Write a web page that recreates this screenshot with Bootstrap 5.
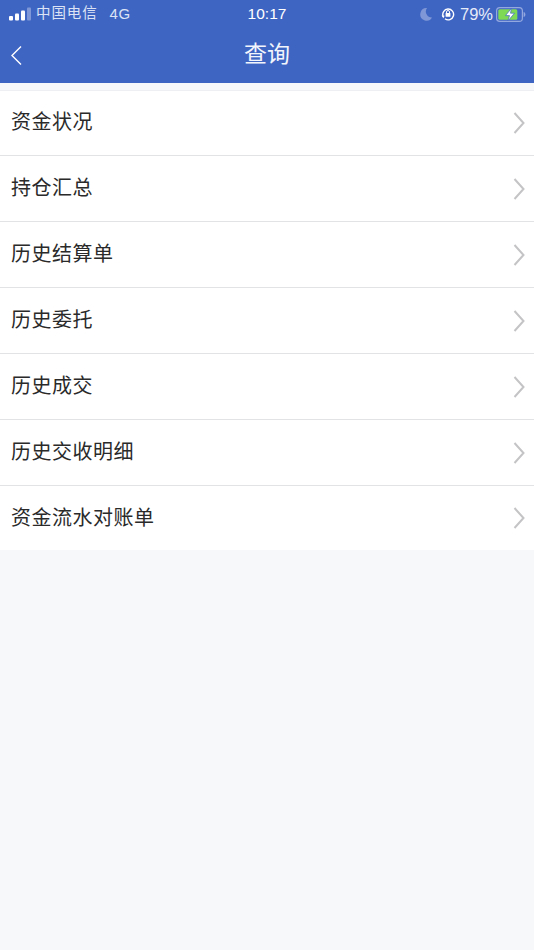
<!DOCTYPE html>
<html lang="zh">
<head>
<meta charset="utf-8">
<title>查询</title>
<link href="https://cdn.jsdelivr.net/npm/bootstrap@5.3.0/dist/css/bootstrap.min.css" rel="stylesheet">
<style>
html,body{height:100%}
body{background:#f7f8fa;font-family:"Noto Sans CJK SC","Liberation Sans",sans-serif;overflow:hidden}
.top-area{background:#3f65c3;height:83px;color:#fff}
.status-row{height:28px;padding:0 8px 0 9px;font-size:15px;color:#dbe3f5;font-family:"Liberation Sans","Noto Sans CJK SC",sans-serif}
.status-row .clock{color:#fff;font-size:15.5px;position:absolute;left:0;right:0;text-align:center;top:4px;line-height:20px}
.cn-carrier{font-size:14.5px;letter-spacing:.9px;margin-left:5px}
.net{margin-left:12px;font-size:15px;letter-spacing:.5px}
.title-row{height:55px}
.title-text{font-size:23px;line-height:1;color:#f2f5fc;padding-bottom:7px}
.back-link{position:absolute;left:10px;top:17px;line-height:0}
.pct{font-size:16.5px;color:#e6ebf8;margin:0 3px 0 5px}
.query-list{margin-top:7px;--bs-list-group-border-color:#e2e3e5;--bs-list-group-border-radius:0}
.query-row{height:66px;padding:0 9px 0 11px;font-size:20px;color:#2a2a2a;border-width:0 0 2px;line-height:1}
.query-row:last-child{height:64px;border-bottom:0}
.query-row:first-child{height:66px;border-top:1px solid #eeeff3}
.query-row span{letter-spacing:.5px;margin-top:-3px}
.query-row:first-child span{margin-top:-4px}
</style>
</head>
<body>
<div class="top-area position-relative">
  <div class="status-row d-flex align-items-center position-relative">
    <svg width="22" height="14" viewBox="0 0 22 14" aria-hidden="true"><rect x="0" y="9" width="4" height="4.5" rx="1" fill="#fff"/><rect x="6" y="6.5" width="4" height="7" rx="1" fill="#fff"/><rect x="12" y="3.5" width="4" height="10" rx="1" fill="#fff"/><rect x="18" y="0.5" width="4" height="13" rx="1" fill="#7f97d6"/></svg>
    <span class="cn-carrier">中国电信</span><span class="net">4G</span>
    <span class="clock">10:17</span>
    <div class="ms-auto d-flex align-items-center">
      <svg width="14" height="14" viewBox="0 0 14 14" class="me-2" aria-hidden="true"><path d="M8 1a6.3 6.3 0 1 0 5 9.5A6 6 0 0 1 8 1z" fill="#7f97d6"/></svg>
      <svg width="14" height="14" viewBox="0 0 14 14" aria-hidden="true"><path d="M2.2 9.5A5.4 5.4 0 1 1 4 11.8" fill="none" stroke="#fff" stroke-width="1.4"/><path d="M.6 8.6l3 .1-1.2 2.6z" fill="#fff"/><rect x="4.6" y="6" width="4.8" height="3.8" rx=".6" fill="#fff"/><path d="M5.5 6V5a1.5 1.5 0 0 1 3 0v1" fill="none" stroke="#fff" stroke-width="1"/></svg>
      <span class="pct">79%</span>
      <svg width="30" height="15" viewBox="0 0 30 15" aria-hidden="true"><rect x=".6" y=".6" width="25.8" height="13.8" rx="3.2" fill="none" stroke="#93a8de" stroke-width="1.2"/><rect x="2.3" y="2.3" width="19" height="10.4" rx="1.5" fill="#7ed957"/><path d="M27.6 5v5c1.2-.3 1.8-1.3 1.8-2.5s-.6-2.2-1.8-2.5z" fill="#93a8de"/><path d="M15.5 1.2L9.5 8.6h4l-1.5 5.2 6.5-7.6h-4z" fill="#fff" stroke="#3f65c3" stroke-width=".7"/></svg>
    </div>
  </div>
  <div class="title-row d-flex align-items-center justify-content-center position-relative">
    <a class="back-link" href="#" aria-label="返回"><svg width="13" height="20" viewBox="0 0 13 20" aria-hidden="true"><path d="M11 1.5L2 10.5l9 9" fill="none" stroke="#fff" stroke-width="1.4"/></svg></a>
    <span class="title-text">查询</span>
  </div>
</div>
<div class="list-group list-group-flush query-list">
  <a href="#" class="list-group-item query-row d-flex align-items-center justify-content-between"><span>资金状况</span><svg width="12" height="22" viewBox="0 0 12 22" aria-hidden="true"><path d="M1.5 1l9 10-9 10" fill="none" stroke="#c4c4c6" stroke-width="2"/></svg></a>
  <a href="#" class="list-group-item query-row d-flex align-items-center justify-content-between"><span>持仓汇总</span><svg width="12" height="22" viewBox="0 0 12 22" aria-hidden="true"><path d="M1.5 1l9 10-9 10" fill="none" stroke="#c4c4c6" stroke-width="2"/></svg></a>
  <a href="#" class="list-group-item query-row d-flex align-items-center justify-content-between"><span>历史结算单</span><svg width="12" height="22" viewBox="0 0 12 22" aria-hidden="true"><path d="M1.5 1l9 10-9 10" fill="none" stroke="#c4c4c6" stroke-width="2"/></svg></a>
  <a href="#" class="list-group-item query-row d-flex align-items-center justify-content-between"><span>历史委托</span><svg width="12" height="22" viewBox="0 0 12 22" aria-hidden="true"><path d="M1.5 1l9 10-9 10" fill="none" stroke="#c4c4c6" stroke-width="2"/></svg></a>
  <a href="#" class="list-group-item query-row d-flex align-items-center justify-content-between"><span>历史成交</span><svg width="12" height="22" viewBox="0 0 12 22" aria-hidden="true"><path d="M1.5 1l9 10-9 10" fill="none" stroke="#c4c4c6" stroke-width="2"/></svg></a>
  <a href="#" class="list-group-item query-row d-flex align-items-center justify-content-between"><span>历史交收明细</span><svg width="12" height="22" viewBox="0 0 12 22" aria-hidden="true"><path d="M1.5 1l9 10-9 10" fill="none" stroke="#c4c4c6" stroke-width="2"/></svg></a>
  <a href="#" class="list-group-item query-row d-flex align-items-center justify-content-between"><span>资金流水对账单</span><svg width="12" height="22" viewBox="0 0 12 22" aria-hidden="true"><path d="M1.5 1l9 10-9 10" fill="none" stroke="#c4c4c6" stroke-width="2"/></svg></a>
</div>
<script src="https://cdn.jsdelivr.net/npm/bootstrap@5.3.0/dist/js/bootstrap.bundle.min.js"></script>
</body>
</html>
